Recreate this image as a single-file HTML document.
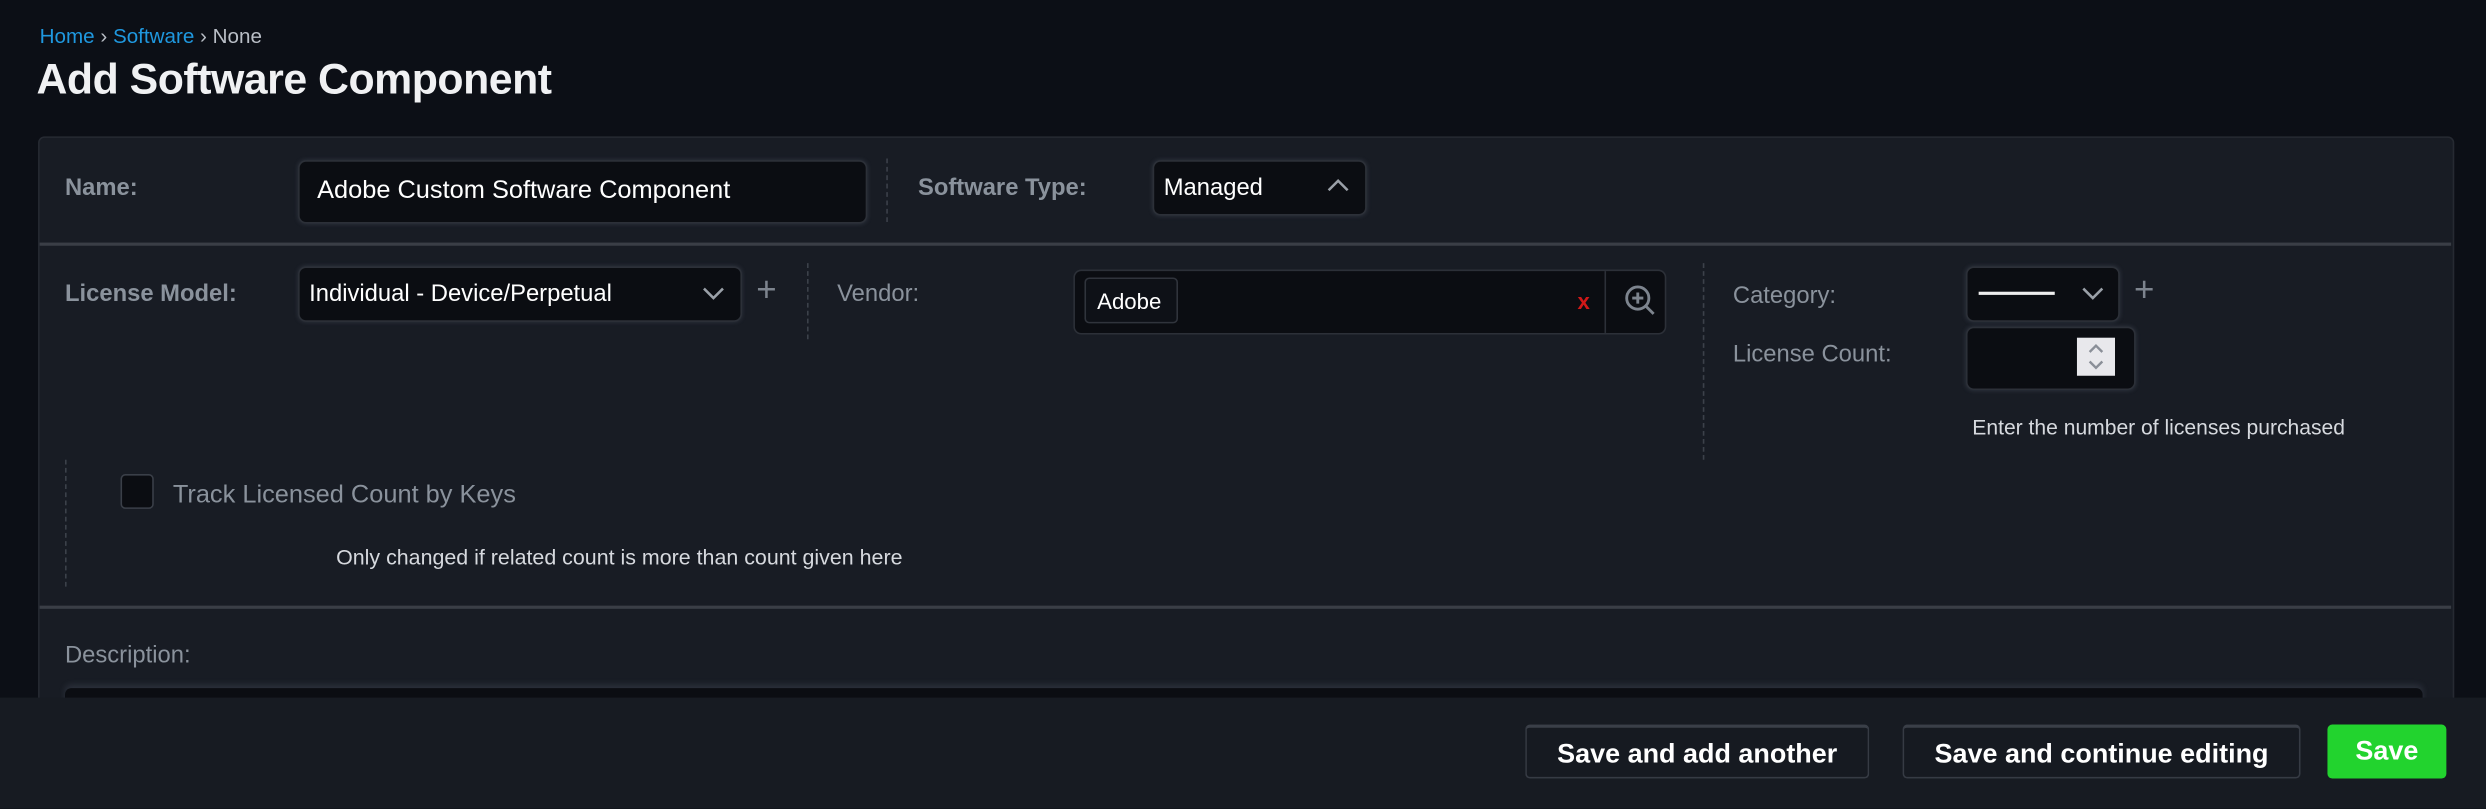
<!DOCTYPE html>
<html><head><meta charset="utf-8"><style>
html,body{margin:0;padding:0;background:#0c0f16;overflow:hidden;width:2486px;height:796px}
#w{position:absolute;left:0;top:0;width:1568px;height:510px;transform:scale(1.58546);transform-origin:0 0;font-family:"Liberation Sans",sans-serif;overflow:hidden}
.a{position:absolute}
.lbl{color:#8a929c;font-size:15px}
.b{font-weight:bold}
.in{background:#0b0d12;border:1px solid #2c3038;border-radius:5px;box-shadow:0 0 3px rgba(120,130,150,.25)}
.dv{border-left:1px dashed #3c414a;width:0}
.t{color:#fff;white-space:nowrap}
.btn{position:absolute;top:457px;height:34px;border:1px solid #363b44;border-top:2px solid #3a3f48;border-radius:3px;background:#161a21;color:#fff;font-weight:bold;font-size:17px;line-height:34px;text-align:center;box-sizing:border-box}
</style></head><body><div id="w">
<div class="a" style="left:25px;top:15px;font-size:13px;color:#b9bec6"><span style="color:#1f98df">Home</span> › <span style="color:#1f98df">Software</span> › None</div>
<div class="a t b" style="left:23px;top:35px;font-size:27px;letter-spacing:-0.3px;color:#f0f1f3">Add Software Component</div>

<div class="a" style="left:24px;top:86px;width:1522px;height:420px;background:#181c24;border:1px solid #262a32;border-radius:4px"></div>
<div class="a" style="left:25px;top:153px;width:1521px;height:2px;background:#3a3e46"></div>
<div class="a" style="left:25px;top:382px;width:1521px;height:2px;background:#3a3e46"></div>

<div class="a lbl b" style="left:41px;top:110px">Name:</div>
<div class="a in" style="left:188px;top:101px;width:357px;height:38px"></div>
<div class="a t" style="left:200px;top:112px;font-size:16px">Adobe Custom Software Component</div>
<div class="a dv" style="left:559px;top:100px;height:40px"></div>
<div class="a lbl b" style="left:579px;top:110px">Software Type:</div>
<div class="a in" style="left:727px;top:101px;width:133px;height:33px"></div>
<div class="a t" style="left:734px;top:110px;font-size:15px">Managed</div>
<svg class="a" style="left:837px;top:112px" width="14" height="10"><path d="M1 8 L7 2 L13 8" stroke="#9aa0a8" stroke-width="1.6" fill="none"/></svg>

<div class="a lbl b" style="left:41px;top:177px">License Model:</div>
<div class="a in" style="left:188px;top:168px;width:278px;height:33px"></div>
<div class="a t" style="left:195px;top:177px;font-size:15px">Individual - Device/Perpetual</div>
<svg class="a" style="left:443px;top:180px" width="14" height="10"><path d="M1 2 L7 8 L13 2" stroke="#9aa0a8" stroke-width="1.6" fill="none"/></svg>
<div class="a" style="left:477px;top:170px;color:#7d848e;font-size:22px">+</div>
<div class="a dv" style="left:509px;top:166px;height:48px"></div>
<div class="a lbl" style="left:528px;top:177px">Vendor:</div>
<div class="a in" style="left:677px;top:170px;width:372px;height:39px;box-shadow:none"></div>
<div class="a" style="left:1012px;top:171px;width:1px;height:39px;background:#2c3038"></div>
<div class="a" style="left:684px;top:175px;width:59px;height:29px;border:1px solid #30343c;border-radius:3px;box-sizing:border-box;background:#0e1117"></div>
<div class="a t" style="left:692px;top:182px;font-size:14px">Adobe</div>
<div class="a" style="left:995px;top:182px;color:#d01818;font-size:14px;font-weight:bold">x</div>
<svg class="a" style="left:1023px;top:178px" width="24" height="24"><circle cx="10" cy="10" r="7" stroke="#7d848e" stroke-width="1.8" fill="none"/><path d="M10 6.5V13.5M6.5 10H13.5M15 15L20 20" stroke="#7d848e" stroke-width="1.8"/></svg>
<div class="a dv" style="left:1074px;top:166px;height:124px"></div>
<div class="a lbl" style="left:1093px;top:178px">Category:</div>
<div class="a in" style="left:1240px;top:168px;width:95px;height:33px"></div>
<div class="a" style="left:1248px;top:184px;width:48px;height:2px;background:#eee"></div>
<svg class="a" style="left:1313px;top:180px" width="14" height="10"><path d="M1 2 L7 8 L13 2" stroke="#9aa0a8" stroke-width="1.6" fill="none"/></svg>
<div class="a" style="left:1346px;top:170px;color:#7d848e;font-size:22px">+</div>
<div class="a lbl" style="left:1093px;top:215px">License Count:</div>
<div class="a in" style="left:1240px;top:206px;width:105px;height:38px"></div>
<div class="a" style="left:1310px;top:213px;width:24px;height:24px;background:#e8e8ec"></div>
<svg class="a" style="left:1310px;top:213px" width="24" height="24"><path d="M8 9L12 5L16 9M8 15L12 19L16 15" stroke="#8a8f98" stroke-width="1.5" fill="none"/></svg>
<div class="a" style="left:1244px;top:262px;font-size:13.3px;color:#d6d9de">Enter the number of licenses purchased</div>

<div class="a dv" style="left:41px;top:290px;height:80px"></div>
<div class="a" style="left:76px;top:299px;width:19px;height:20px;border:1px solid #3a3f48;border-radius:3px;background:#0b0d12"></div>
<div class="a" style="left:109px;top:304px;font-size:16px;color:#8a929c">Track Licensed Count by Keys</div>
<div class="a" style="left:212px;top:344px;font-size:13.5px;color:#d6d9de">Only changed if related count is more than count given here</div>

<div class="a lbl" style="left:41px;top:405px">Description:</div>
<div class="a" style="left:41px;top:434px;width:1487px;height:20px;background:#0b0d12;border-radius:4px;box-shadow:0 -2px 4px rgba(120,130,150,.2)"></div>

<div class="a" style="left:0;top:440px;width:1568px;height:80px;background:#171b22"></div>
<div class="btn" style="left:962px;width:217px">Save and add another</div>
<div class="btn" style="left:1200px;width:251px">Save and continue editing</div>
<div class="btn" style="left:1468px;width:75px;background:#22d32e;border:none">Save</div>
</div></body></html>
